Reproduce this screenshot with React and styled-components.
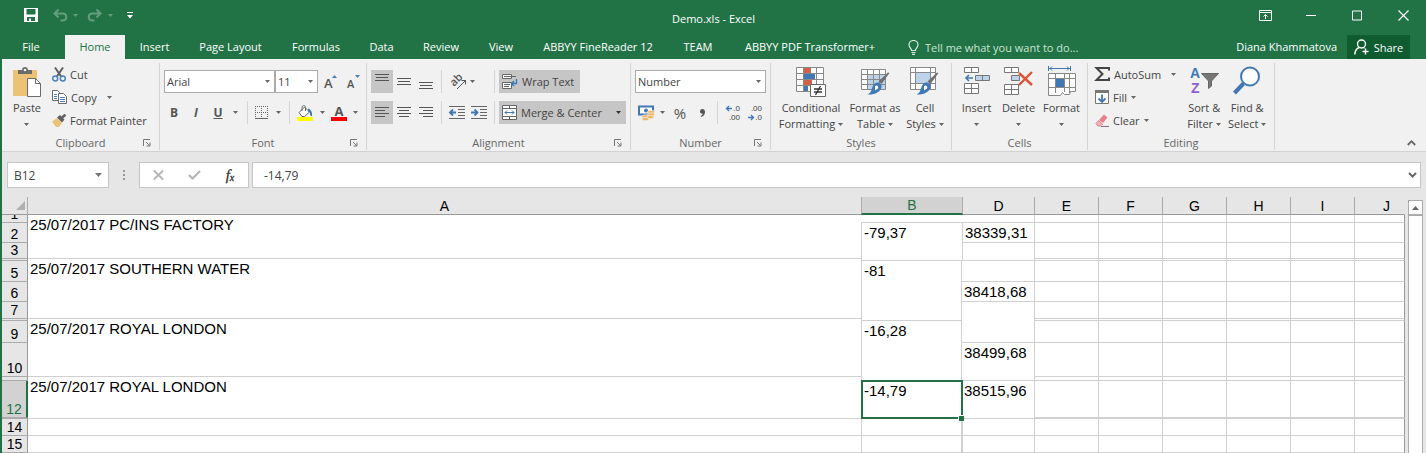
import React from 'react';
import styled, { createGlobalStyle, css } from 'styled-components';

const ui = '"Open Sans", "Noto Sans", sans-serif';
const sheetFont = '"Liberation Sans", Arial, sans-serif';

const Global = createGlobalStyle`
  *, *::before, *::after { box-sizing: border-box; }
  body { margin: 0; background: #e6e6e6; font-family: ${ui}; font-size: 12px; color: #444; }
  button, input, select { font: inherit; color: inherit; margin: 0; }
  svg { display: block; flex: none; overflow: visible; }
`;

const Window = styled.div`
  border-left: 1px solid #217346;
  box-shadow: inset 1px 0 #217346;
  padding-left: 1px;
  background: #e6e6e6;
`;

/* ---------- title bar and tabs ---------- */
const TitleBar = styled.header`
  display: grid;
  grid-template-columns: 1fr auto 1fr;
  align-items: center;
  height: 35px;
  margin-left: -1px;
  background: #217346;
  color: #fff;
`;
const Title = styled.h1`
  margin: 0;
  padding-top: 3px;
  font-size: 11px;
  font-weight: 400;
  line-height: 16px;
`;
const QuickAccess = styled.div`
  display: flex;
  align-items: center;
  padding: 0 0 5px 23px;
`;
const QuickButton = styled.button`
  display: flex;
  align-items: center;
  justify-content: center;
  width: ${p => p.$w}px;
  height: 20px;
  margin-right: ${p => p.$gap || 0}px;
  padding: 0;
  border: 0;
  background: none;
  color: #fff;
  opacity: ${p => (p.$dim ? 0.3 : 1)};
`;
const WindowButtons = styled.div`
  display: flex;
  justify-content: flex-end;
  padding: 0 0 5px;
`;
const WindowButton = styled.button`
  display: flex;
  align-items: center;
  justify-content: center;
  width: 46px;
  height: 30px;
  padding: 0;
  border: 0;
  background: none;
  color: #fff;
`;
const TabBar = styled.nav`
  display: flex;
  height: 24px;
  margin-left: -1px;
  padding-left: 1px;
  padding-right: 16px;
  background: #217346;
  color: #fff;
`;
const Tab = styled.button`
  width: ${p => p.$w}px;
  padding: 0;
  border: 0;
  line-height: 24px;
  font-size: 11px;
  white-space: nowrap;
  background: ${p => (p.$active ? '#f1f1f1' : 'none')};
  color: ${p => (p.$active ? '#217346' : '#fff')};
  ${p => p.$file && css`margin-right: 5px;`}
`;
const TellMe = styled.label`
  display: flex;
  align-items: center;
  gap: 6px;
  flex: 1;
  padding-left: 16px;
`;
const TellInput = styled.input`
  width: 200px;
  padding: 0;
  border: 0;
  outline: 0;
  background: none;
  font-size: 11px;
  &::placeholder { color: #c9e3d3; opacity: 1; }
`;
const User = styled.span`
  padding-right: 10px;
  font-size: 11px;
  line-height: 24px;
`;
const Share = styled.button`
  display: flex;
  align-items: center;
  justify-content: center;
  gap: 5px;
  width: 63px;
  padding: 0;
  border: 0;
  background: #0e5c2f;
  color: #fff;
  font-size: 11px;
`;

/* ---------- ribbon ---------- */
const Ribbon = styled.section`
  display: flex;
  height: 93px;
  padding: 4px 0 1px;
  border-bottom: 1px solid #d2d2d2;
  background: #f1f1f1;
`;
const GroupBox = styled.section`
  display: flex;
  flex-direction: column;
  flex: none;
  width: ${p => p.$w}px;
  border-right: 1px solid #d5d5d5;
`;
const GroupBody = styled.div`
  display: flex;
  flex: 1;
  padding: 0 ${p => p.$padRight || 0}px 0 ${p => p.$pad || 0}px;
`;
const Caption = styled.footer`
  display: grid;
  grid-template-columns: 16px 1fr 16px;
  height: 14px;
  align-items: center;
  text-align: center;
  font-size: 11px;
  line-height: 14px;
  color: #666;
`;
const Launcher = styled.button`
  padding: 0;
  border: 0;
  background: none;
  color: #777;
`;
const BigButton = styled.button`
  display: flex;
  flex-direction: column;
  align-items: center;
  flex: none;
  width: ${p => p.$w}px;
  padding: 4px 0 0;
  border: 0;
  background: none;
`;
const BigLabel = styled.span`
  display: flex;
  flex-direction: column;
  align-items: center;
  margin-top: 3px;
  font-size: 11px;
  line-height: 16px;
  white-space: nowrap;
`;
const BigLine = styled.span`
  display: flex;
  align-items: center;
  justify-content: center;
  gap: 3px;
  height: 16px;
`;
const Column = styled.div`
  display: flex;
  flex-direction: column;
  flex: none;
  padding-top: ${p => p.$top || 0}px;
  gap: ${p => p.$gap || 0}px;
  padding-right: ${p => p.$right || 0}px;
`;
const Row = styled.div`
  display: flex;
  align-items: center;
  height: 23px;
`;
const SmallButton = styled.button`
  display: flex;
  align-items: center;
  gap: ${p => p.$gap || 4}px;
  height: 22px;
  padding: 0;
  border: 0;
  background: none;
  font-size: 11px;
  white-space: nowrap;
`;
const SmallCaret = styled.span`
  padding-left: ${p => p.$left || 0}px;
`;
const Tool = styled.button`
  display: flex;
  align-items: center;
  justify-content: center;
  flex: none;
  width: ${p => p.$w || 22}px;
  height: 23px;
  padding: 0;
  border: 0;
  background: ${p => (p.$on ? '#c6c6c6' : 'none')};
  font-size: ${p => p.$size || 12}px;
  font-weight: ${p => (p.$bold ? 700 : 400)};
  font-style: ${p => (p.$italic ? 'italic' : 'normal')};
  text-decoration: ${p => (p.$under ? 'underline' : 'none')};
  color: #555;
`;
const WideTool = styled.button`
  display: flex;
  align-items: center;
  gap: 4px;
  width: ${p => p.$w}px;
  height: 23px;
  padding: 0 5px 0 3px;
  border: 0;
  background: #c6c6c6;
  font-size: 11px;
  white-space: nowrap;
  & > :last-child { margin-left: ${p => (p.$drop ? 'auto' : 0)}; }
`;
const Divider = styled.span`
  flex: none;
  width: 1px;
  height: 23px;
  margin: 0 ${p => p.$r}px 0 ${p => p.$l}px;
  background: #d5d5d5;
`;
const SelectWrap = styled.label`
  display: grid;
  align-items: center;
  flex: none;
  width: ${p => p.$w}px;
  & > * { grid-area: 1 / 1; }
  & > svg { justify-self: end; margin-right: 5px; pointer-events: none; }
`;
const Select = styled.select`
  appearance: none;
  width: 100%;
  height: 23px;
  padding: 0 2px;
  border: 1px solid #ababab;
  border-radius: 0;
  background: #fff;
  font-size: 11px;
`;
const CollapseButton = styled.button`
  margin: auto 10px 4px auto;
  padding: 0;
  border: 0;
  background: none;
`;

/* ---------- formula bar ---------- */
const FormulaBar = styled.div`
  display: flex;
  height: 45px;
  padding: 10px 5px 9px;
`;
const Box = styled.div`
  display: flex;
  align-items: center;
  width: ${p => (p.$w ? p.$w + 'px' : 'auto')};
  flex: ${p => (p.$w ? 'none' : 1)};
  height: 26px;
  padding-right: ${p => p.$right || 0}px;
  border: 1px solid #c6c6c6;
  background: #fff;
`;
const BarInput = styled.input`
  flex: 1;
  min-width: 0;
  height: 22px;
  padding: 0 0 0 ${p => p.$pad}px;
  border: 0;
  outline: 0;
  background: none;
`;
const Grip = styled.span`
  display: flex;
  align-items: center;
  justify-content: center;
  width: 30px;
`;
const BarButton = styled.button`
  display: flex;
  align-items: center;
  justify-content: center;
  flex: 1;
  padding: 0;
  border: 0;
  background: none;
`;
const Spacer = styled.span`
  width: 3px;
`;
const Fx = styled.span`
  font-family: "Liberation Serif", serif;
  font-style: italic;
  font-size: 15px;
  line-height: 16px;
  color: #333;
  -webkit-text-stroke: 0.3px #333;
  sub { font-size: 10px; line-height: 0; vertical-align: -1px; }
`;

/* ---------- sheet ---------- */
const SheetArea = styled.main`
  display: flex;
  padding-right: 3px;
`;
const Sheet = styled.table`
  flex: 1;
  width: 100%;
  table-layout: fixed;
  border-collapse: separate;
  border-spacing: 0;
  font-family: ${sheetFont};
  font-size: 15px;
  line-height: 17px;
  color: #000;
`;
const Col = styled.col`
  width: ${p => (p.$w ? p.$w + 'px' : 'auto')};
`;
const ColHead = styled.th`
  height: 18px;
  padding: ${p => (p.$last ? '0 0 0 14px' : 0)};
  border-right: ${p => (p.$open ? 0 : 1)}px solid ${p => (p.$last ? '#e6e6e6' : '#ababab')};
  border-bottom: 1px solid #999;
  background: #e6e6e6;
  font-size: 14px;
  font-weight: 400;
  line-height: 16px;
  ${p => p.$active && css`
    border-left: 1px solid #ababab;
    border-bottom: 2px solid #217346;
    background: #d2d2d2;
    color: #217346;
  `}
`;
const Corner = styled(ColHead)`
  vertical-align: middle;
  svg { margin: 0 2px 0 auto; }
`;
const RowHead = styled.th`
  height: ${p => p.$h}px;
  padding: 0;
  border-right: ${p => (p.$active ? '2px solid #217346' : '1px solid #999')};
  border-bottom: 1px solid #ababab;
  background: ${p => (p.$active ? '#d2d2d2' : '#e6e6e6')};
  color: ${p => (p.$active ? '#217346' : '#000')};
  font-weight: 400;
  font-size: 14px;
  line-height: 15px;
`;
const RowLabel = styled.div`
  display: flex;
  align-items: flex-end;
  justify-content: center;
  height: ${p => p.$h - 1}px;
  overflow: hidden;
`;
const Cell = styled.td`
  position: relative;
  padding: 1px 0 0 2px;
  vertical-align: top;
  background: #fff;
  border: 0 solid #d0d0d0;
  border-bottom-width: 1px;
  border-right-width: ${p => (p.$noRight ? 0 : 1)}px;
  border-left-width: ${p => (p.$left ? 1 : 0)}px;
  white-space: nowrap;
  ${p => p.$flat && css`padding: 0;`}
  ${p => p.$edge && css`border-right-color: #999;`}
`;
const Selection = styled.span`
  position: absolute;
  inset: -1px -2px -1px -1px;
  border: 2px solid #217346;
  z-index: 1;
  &::after {
    content: '';
    position: absolute;
    right: -3px;
    bottom: -4px;
    width: 6px;
    height: 6px;
    border: solid #fff;
    border-width: 1px 0 0 1px;
    background: #217346;
  }
`;
const Scrollbar = styled.div`
  display: flex;
  flex-direction: column;
  flex: none;
  width: 15px;
  margin: 3px 0 0 3px;
`;
const ScrollButton = styled.button`
  display: flex;
  align-items: center;
  justify-content: center;
  height: 15px;
  padding: 0;
  border: 1px solid #ababab;
  background: #fff;
`;
const Thumb = styled.div`
  flex: 1;
  border: 1px solid #ababab;
  border-bottom: 0;
  background: #fff;
`;

/* ---------- icons ---------- */
const Caret = ({ c = '#666' }) => (
  <svg width="5" height="3" viewBox="0 0 5 3"><path d="M0 0h5L2.5 3z" fill={c} /></svg>
);
const SaveIcon = () => (
  <svg width="14" height="14" viewBox="0 0 14 14"><path fillRule="evenodd" fill="#fff" d="M0 0h14v14H0zM2.500 1v5.500h9V1zM3 9v4h2v-2.500h2V13h4V9z" /></svg>
);
const UndoIcon = ({ flip }) => (
  <svg width="15" height="13" viewBox="0 0 15 13" fill="none" stroke="#fff" strokeWidth="2">
    <g transform={flip ? 'matrix(-1 0 0 1 15 0)' : undefined}><path d="M5.500 .5 1.500 4.500l4 4M2 4.500h7.500c5 0 5 7 0 7H7.500" /></g>
  </svg>
);
const MoreIcon = () => (
  <svg width="6" height="7" viewBox="0 0 6 7" fill="#fff"><path d="M0 0h6v1H0zM0 3h6L3 6.500z" /></svg>
);
const RibbonOptIcon = () => (
  <svg width="13" height="11" viewBox="0 0 13 11" fill="none" stroke="#fff"><path d="M.5.500h12v10H.500zM.500 2.500h12M6.500 9V4.500M4.500 6.500l2-2 2 2" /></svg>
);
const MinIcon = () => <svg width="10" height="11" viewBox="0 0 10 11" stroke="#fff"><path d="M0 5.500h10" /></svg>;
const MaxIcon = () => <svg width="10" height="11" viewBox="0 0 10 11" stroke="#fff" fill="none"><path d="M.5 1h9v9h-9z" /></svg>;
const CloseIcon = () => <svg width="11" height="11" viewBox="0 0 11 11" stroke="#fff" strokeWidth="1.200"><path d="m.5.500 10 10M10.500.500l-10 10" /></svg>;
const BulbIcon = () => (
  <svg width="11" height="15" viewBox="0 0 11 15" fill="none" stroke="#d8ecdf" strokeWidth="1.200"><path d="M3.500 10.500C3.500 8 1 7.500 1 4.800a4.500 4.300 0 0 1 9 0c0 2.700-2.500 3.200-2.500 5.700zM3.500 12.500h4M4 14.300h3" /></svg>
);
const PersonIcon = () => (
  <svg width="15" height="16" viewBox="0 0 15 16" fill="none" stroke="#fff" strokeWidth="1.400"><circle cx="7.500" cy="5" r="4" /><path d="M.8 15.500c.2-4 2-6.200 4.500-7M9.500 8.500l1 .8M11.500 9.500v6M8.500 12.500h6" /></svg>
);
const LaunchIcon = () => (
  <svg width="8" height="8" viewBox="0 0 8 8" fill="none" stroke="#777"><path d="M.5 7V.500H7M3 3l3.500 3.500M7 3.500V7H3.500" /></svg>
);
const PasteIcon = () => (
  <svg width="30" height="30" viewBox="0 0 30 30">
    <path d="M1 3h24v26H1z" fill="#ecc277" />
    <path d="M6 3h4c0-4 6-4 6 0h4v4H6z" fill="#6a6a6a" />
    <circle cx="13" cy="3" r="1.300" fill="#f1f1f1" />
    <path d="M15.500 11.500h8l5 5v13h-13z" fill="#fff" stroke="#6a6a6a" />
    <path d="M23.500 11.500v5h5" fill="none" stroke="#6a6a6a" />
  </svg>
);
const CutIcon = () => (
  <svg width="14" height="15" viewBox="0 0 14 15" fill="none">
    <path d="M3 .5 9.500 10M11 .5 4.500 10" stroke="#5f5f5f" strokeWidth="2" />
    <circle cx="3.200" cy="11.500" r="2.500" stroke="#4a7ebb" strokeWidth="1.400" /><circle cx="10.800" cy="11.500" r="2.500" stroke="#4a7ebb" strokeWidth="1.400" />
  </svg>
);
const CopyIcon = () => (
  <svg width="15" height="14" viewBox="0 0 15 14" fill="#fff" stroke="#6a6a6a">
    <path d="M.5.500h5l2 2v8h-7z" /><path d="M6.500 3.500h5l3 3v7h-8z" />
    <path d="M2 4.500h3M2 6.500h3M2 8.500h3M8 7.500h5M8 9.500h5M8 11.500h5" stroke="#4a7ebb" />
  </svg>
);
const PainterIcon = () => (
  <svg width="15" height="13" viewBox="0 0 15 13">
    <path d="M0 7.500 5 4l5 5-3 4H4z" fill="#ecc277" /><path d="m5 3.500 3-2.500 4.500 4.500-2.500 3z" fill="#5f5f5f" /><path d="M10 3.500 13.500.800" stroke="#5f5f5f" strokeWidth="2.500" />
  </svg>
);
const GrowIcon = ({ down }) => (
  <svg width="14" height="15" viewBox="0 0 14 15">
    <text x="0" y="14" fontFamily="Open Sans" fontSize={down ? 11 : 13} fontWeight="600" fill="#555">A</text>
    <path d={down ? 'M8 1h5l-2.500 3z' : 'M8 4h5l-2.500-3z'} fill="#4a7ebb" />
  </svg>
);
const BorderIcon = () => (
  <svg width="13" height="13" viewBox="0 0 13 13" fill="none" stroke="#666"><path d="M.5 0v12M6.500 0v12M12.500 0v12M0 .5h13M0 6.500h13" strokeDasharray="1 1" /><path d="M0 12.500h13" /></svg>
);
const FillColorIcon = () => (
  <svg width="16" height="16" viewBox="0 0 16 16">
    <path d="M2 7.500 7.500 2l5 5-5 4.500H5z" fill="#fff" stroke="#666" /><path d="M5 6V2.500c0-2.500 3.500-2.500 3.500 0V6" fill="none" stroke="#666" />
    <path d="M11 3.500c3 1 4.500 3.500 4 8l-2-1.500c.5-2-.500-3-2-3.500z" fill="#3f78b5" /><path d="M0 12h16v4H0z" fill="#ff0" />
  </svg>
);
const FontColorIcon = () => (
  <svg width="16" height="16" viewBox="0 0 16 16"><text x="8" y="11" textAnchor="middle" fontFamily="Open Sans" fontSize="13" fontWeight="700" fill="#555">A</text><path d="M0 12h16v4H0z" fill="#f00" /></svg>
);
const LinesIcon = ({ rows, h = 13 }) => (
  <svg width="14" height={h} viewBox={`0 0 14 ${h}`} stroke="#555">{rows.map(([y, x1, x2]) => <path key={y} d={`M${x1} ${y}.500H${x2}`} />)}</svg>
);
const AngleIcon = () => (
  <svg width="17" height="16" viewBox="0 0 17 16">
    <text transform="translate(4 13) rotate(-45)" fontFamily="Open Sans" fontSize="11" fontWeight="600" fill="#555">ab</text>
    <path d="M7 15 15.500 6.500M11.500 6.500h4v4" fill="none" stroke="#555" />
  </svg>
);
const IndentIcon = ({ right }) => (
  <svg width="16" height="13" viewBox="0 0 16 13" fill="none" stroke="#666">
    <path d="M0 .5h16M9 3.500h7M9 6.500h7M9 9.500h7M0 12.500h16" />
    <path d={right ? 'M0 6.500h6M3.500 3.500l3 3-3 3' : 'M7 6.500H1M4 3.500l-3 3 3 3'} stroke="#3f78b5" strokeWidth="1.800" />
  </svg>
);
const WrapIcon = () => (
  <svg width="16" height="15" viewBox="0 0 16 15" fill="#fff" stroke="#666">
    <path d="M.5.500h9v4h-9zM.500 8.500h9v6h-9z" /><path d="M2 2.500h12M2 10.500h6M2 12.500h5" />
    <path d="M14.500 5v4.500H10M12 7l-2.500 2.500L12 12" fill="none" stroke="#3f78b5" strokeWidth="1.400" />
  </svg>
);
const MergeIcon = () => (
  <svg width="15" height="15" viewBox="0 0 15 15" fill="#fff" stroke="#666">
    <path d="M.5.500h14v14H.500zM.500 3.500h14M.500 11.500h14M7.500 0v3.500M7.500 11.500v3.500" /><path d="M3 7.500h9M5 5.500l-2 2 2 2M10 5.500l2 2-2 2" fill="none" stroke="#3f78b5" />
  </svg>
);
const MoneyIcon = () => (
  <svg width="17" height="16" viewBox="0 0 17 16">
    <path d="M1 1.500h14v8H1z" fill="#fff" stroke="#3f78b5" strokeWidth="2" /><circle cx="8" cy="5.500" r="2" fill="#3f78b5" />
    <g fill="#ecb96a" stroke="#f1f1f1" strokeWidth=".6"><ellipse cx="13" cy="7" rx="3.500" ry="1.700" /><ellipse cx="13" cy="9.500" rx="3.500" ry="1.700" /><ellipse cx="7.500" cy="11.500" rx="3.500" ry="1.700" /><ellipse cx="12.500" cy="12" rx="3.500" ry="1.700" /><ellipse cx="7.500" cy="14" rx="3.500" ry="1.700" /></g>
  </svg>
);
const CommaIcon = () => (
  <svg width="5" height="8" viewBox="0 0 5 8"><path d="M2.300 0C4 0 5 1.200 5 3c0 2.500-1.500 4.300-4 5l-.3-1C2 6.500 2.700 5.700 2.700 4.600 1 4.800 0 3.800 0 2.400 0 1 1 0 2.300 0z" fill="#555" /></svg>
);
const DecimalIcon = ({ less }) => (
  <svg width="16" height="16" viewBox="0 0 16 16">
    <g fontFamily="Liberation Sans" fontSize="8" fill="#444" textAnchor="end"><text x="15" y="6">{less ? '.00' : '.0'}</text><text x="15" y="15">{less ? '.0' : '.00'}</text></g>
    <path d={less ? 'M1 12.500h5.500M4 10l2.500 2.500L4 15' : 'M7 3.500H1.500M4 1 1.500 3.500 4 6'} fill="none" stroke="#3f78b5" strokeWidth="1.300" />
  </svg>
);
const CondIcon = () => (
  <svg width="30" height="30" viewBox="0 0 30 30">
    <path d="M.5.500h27v24H.500z" fill="#fff" stroke="#888" />
    <path d="M8 1h6v5H8zM8 13h8v5H8z" fill="#d35f45" /><path d="M8 7h11v5H8zM8 19h4v5H8z" fill="#3f78b5" />
    <path d="M7.500 0v24M14.500 0v6M20.500 0v24M0 6.500h28M0 12.500h28M0 18.500h28" stroke="#888" fill="none" />
    <path d="M14.500 17.500h15v12h-15z" fill="#fff" stroke="#666" /><path d="M18 22h8M18 25h8M24.500 19l-5 9" stroke="#333" strokeWidth="1.300" />
  </svg>
);
const Brush = () => (
  <g><path d="m28.500 6-8 11-3-2.500L27 5.500z" fill="#6f6f6f" /><path d="M17 15.500c2 .3 4 2 3.500 4.500-1 5-7 8-14 7.500 4-2 3.500-4 5-7.500 1-3 3-4.700 5.500-4.500z" fill="#3f78b5" /><path d="M14 19c2-1.500 4 .5 3 2.500l-3 2z" fill="#fff" /></g>
);
const TableIcon = () => (
  <svg width="29" height="30" viewBox="0 0 29 30">
    <path d="M.5 2.500h24v20H.500z" fill="#fff" /><path d="M6.500 7.500h18v15h-18z" fill="#bdd3ea" />
    <path d="M.5 2.500h24v20H.500zM6.500 2v20M12.500 2v20M18.500 2v20M0 7.500h24M0 12.500h24M0 17.500h24" stroke="#888" fill="none" /><Brush />
  </svg>
);
const CellStyleIcon = () => (
  <svg width="30" height="30" viewBox="0 0 30 30">
    <path d="M.5.500h25v22H.500z" fill="#fff" stroke="#888" /><path d="M5.500 0v22M20.500 0v22M0 5.500h25M0 16.500h25" stroke="#888" /><path d="M6 6h14v10H6z" fill="#bdd3ea" /><Brush />
  </svg>
);
const InsertIcon = () => (
  <svg width="26" height="30" viewBox="0 0 26 30" fill="#fff" stroke="#777">
    <path d="M.5.500h14v5H.500zM7.500 0v5M.500 16.500h14v10H.500zM7.500 16v10M.500 21.500h14" /><path d="M11.500 8.500h14v5h-14zM18.500 8v5" fill="#bdd3ea" /><path d="M9 11H2M5 8l-3 3 3 3" fill="none" stroke="#3f78b5" strokeWidth="1.600" />
  </svg>
);
const DeleteIcon = () => (
  <svg width="30" height="30" viewBox="0 0 30 30" fill="#fff" stroke="#777">
    <path d="M.5.500h14v5H.500zM7.500 0v5M.500 17.500h14v10H.500zM7.500 17v10M.500 22.500h14" /><path d="M7.500 8.500h8v5h-8z" fill="#bdd3ea" /><path d="m15 6 13 12M28 5 15 18" stroke="#dd5536" strokeWidth="2.400" fill="none" />
  </svg>
);
const FormatIcon = () => (
  <svg width="28" height="30" viewBox="0 0 28 30" fill="none" stroke="#888">
    <path d="M.5 6.500h27v18h-5l-1 3h-5l-2-2-2 3H.500z" fill="#fff" /><path d="M7.500 6v20M16.500 6v19M21.500 6v20M0 11.500h28M0 20.500h28" /><path d="M8 12h8v8H8z" fill="#3f78b5" stroke="none" />
    <path d="M.5-1v5M22.500-1v5M1 1.500h21M4-.500l-2 2 2 2M19-.500l2 2-2 2" stroke="#3f78b5" />
  </svg>
);
const SumIcon = () => <svg width="15" height="14" viewBox="0 0 15 14" fill="none" stroke="#444" strokeWidth="2"><path d="M14 3.500V1H1.500L7.500 7l-6 6H14v-2.500" /></svg>;
const FillIcon = () => (
  <svg width="14" height="14" viewBox="0 0 14 14"><path d="M.5.500h13v13H.500z" fill="#fff" stroke="#777" /><path d="M0 0h14v3H0z" fill="#777" /><path d="M7 4.500v7M3.500 8.500 7 12l3.500-3.500" fill="none" stroke="#3f78b5" strokeWidth="1.800" /></svg>
);
const ClearIcon = () => (
  <svg width="14" height="13" viewBox="0 0 14 13"><path d="m4 6 5-5.500 3.500 3L8 9z" fill="#e8808c" /><path d="M3.500 6.500 7.500 10l-2 2H3L1 9.500z" fill="#f3b2ba" stroke="#e8808c" /><path d="M6 12.500h8" stroke="#777" /></svg>
);
const SortIcon = () => (
  <svg width="29" height="30" viewBox="0 0 29 30"><g fontFamily="Liberation Sans" fontSize="14" fontWeight="700"><text x="0" y="11" fill="#3f78b5">A</text><text x="1" y="26" fill="#8b5fcf">Z</text></g><path d="M11.500 6.500h17L21.500 14v5l-3 2.500V14z" fill="#777" stroke="#666" /></svg>
);
const FindIcon = () => (
  <svg width="28" height="30" viewBox="0 0 28 30"><path d="m1.500 26 9-9.500" stroke="#3f78b5" strokeWidth="4" /><circle cx="17" cy="9.500" r="9" fill="#fdfdfd" stroke="#3f78b5" strokeWidth="2" /></svg>
);

/* ---------- composed parts ---------- */
const Group = ({ name, w, pad, padRight, launch, children }) => (
  <GroupBox $w={w} aria-label={name}>
    <GroupBody $pad={pad} $padRight={padRight}>{children}</GroupBody>
    <Caption><span /><span>{name}</span>{launch && <Launcher aria-label={`${name} settings`}><LaunchIcon /></Launcher>}</Caption>
  </GroupBox>
);
const Big = ({ w, icon, top, bottom }) => (
  <BigButton $w={w}>{icon}<BigLabel><BigLine>{top}</BigLine><BigLine>{bottom}<Caret /></BigLine></BigLabel></BigButton>
);
const Picker = ({ w, label, value }) => (
  <SelectWrap $w={w}><Select aria-label={label} defaultValue={value}><option>{value}</option></Select><Caret /></SelectWrap>
);

const tabs = [['Home', 60], ['Insert', 59], ['Page Layout', 93], ['Formulas', 78], ['Data', 53], ['Review', 66], ['View', 54], ['ABBYY FineReader 12', 140], ['TEAM', 60], ['ABBYY PDF Transformer+', 164]];

/* Each row lists the cells of columns A to D that start in it; columns E to J are plain. */
const rows = [
  { n: 1, h: 8, cells: [{ t: '25/07/2017 PC/INS FACTORY', rs: 3, noRight: true }, { cs: 3, flat: true }] },
  { n: 2, h: 20, cells: [{ t: '-79,37', rs: 3, cs: 2, left: true }, { t: '38339,31' }] },
  { n: 3, h: 16, cells: [{ rs: 2 }] },
  { h: 2, cells: [{ t: '25/07/2017 SOUTHERN WATER', rs: 4, noRight: true }] },
  { n: 5, h: 21, cells: [{ t: '-81', rs: 4, left: true }, { cs: 2 }] },
  { n: 6, h: 20, cells: [{ t: '38418,68', cs: 2 }] },
  { n: 7, h: 17, cells: [{ rs: 3, cs: 2 }] },
  { h: 2, cells: [{ t: '25/07/2017 ROYAL LONDON', rs: 3, noRight: true }] },
  { n: 9, h: 22, cells: [{ t: '-16,28', rs: 3, left: true }] },
  { n: 10, h: 34, cells: [{ t: '38499,68', rs: 2, cs: 2 }] },
  { h: 4, cells: [{ t: '25/07/2017 ROYAL LONDON', rs: 3, noRight: true }] },
  { n: 12, h: 37, active: true, cells: [{ t: '-14,79', rs: 2, left: true, selected: true }, { t: '38515,96', rs: 2, cs: 2 }] },
  { h: 1, cells: [] },
  { n: 14, h: 17, cells: [{ noRight: true }, { left: true }, { flat: true }, {}] },
  { n: 15, h: 17, cells: [{ noRight: true }, { left: true }, { flat: true }, {}] },
];
const plain = ['E', 'F', 'G', 'H', 'I', 'J'];

export default function App() {
  return (
    <Window>
      <Global />
      <TitleBar>
        <QuickAccess>
          <QuickButton $w={14} $gap={15} aria-label="Save"><SaveIcon /></QuickButton>
          <QuickButton $w={15} $gap={5} $dim aria-label="Undo"><UndoIcon /></QuickButton>
          <QuickButton $w={5} $gap={9} $dim aria-label="Undo list"><Caret c="#fff" /></QuickButton>
          <QuickButton $w={15} $gap={6} $dim aria-label="Redo"><UndoIcon flip /></QuickButton>
          <QuickButton $w={5} $gap={14} $dim aria-label="Redo list"><Caret c="#fff" /></QuickButton>
          <QuickButton $w={6} aria-label="Customize"><MoreIcon /></QuickButton>
        </QuickAccess>
        <Title>Demo.xls - Excel</Title>
        <WindowButtons>
          <WindowButton aria-label="Ribbon options"><RibbonOptIcon /></WindowButton>
          <WindowButton aria-label="Minimize"><MinIcon /></WindowButton>
          <WindowButton aria-label="Maximize"><MaxIcon /></WindowButton>
          <WindowButton aria-label="Close"><CloseIcon /></WindowButton>
        </WindowButtons>
      </TitleBar>
      <TabBar>
        <Tab $w={58} $file>File</Tab>
        {tabs.map(([t, w], i) => <Tab key={t} $w={w} $active={i === 0}>{t}</Tab>)}
        <TellMe><BulbIcon /><TellInput aria-label="Tell me" placeholder="Tell me what you want to do..." /></TellMe>
        <User>Diana Khammatova</User>
        <Share><PersonIcon />Share</Share>
      </TabBar>

      <Ribbon>
        <Group name="Clipboard" w={158} launch>
          <Big w={50} icon={<PasteIcon />} top="Paste" />
          <Column $gap={1}>
            <SmallButton><CutIcon />Cut</SmallButton>
            <SmallButton><CopyIcon />Copy<SmallCaret $left={6}><Caret /></SmallCaret></SmallButton>
            <SmallButton $gap={3}><PainterIcon />Format Painter</SmallButton>
          </Column>
        </Group>
        <Group name="Font" w={207} pad={4} launch>
          <Column $top={7} $gap={8}>
            <Row>
              <Picker w={111} label="Font" value="Arial" />
              <Picker w={43} label="Font size" value="11" />
              <Tool $w={26} aria-label="Increase font size"><GrowIcon /></Tool>
              <Tool $w={20} aria-label="Decrease font size"><GrowIcon down /></Tool>
            </Row>
            <Row>
              <Tool $w={20} $bold>B</Tool><Tool $w={24} $bold $italic>I</Tool><Tool $w={20} $bold $under>U</Tool>
              <Tool $w={14} aria-label="Underline style"><Caret /></Tool>
              <Divider $l={5} $r={7} />
              <Tool $w={13} aria-label="Borders"><BorderIcon /></Tool><Tool $w={20} aria-label="Border style"><Caret /></Tool>
              <Divider $l={1} $r={7} />
              <Tool $w={16} aria-label="Fill color"><FillColorIcon /></Tool><Tool $w={18} aria-label="Fill colors"><Caret /></Tool>
              <Tool $w={16} aria-label="Font color"><FontColorIcon /></Tool><Tool $w={16} aria-label="Font colors"><Caret /></Tool>
            </Row>
          </Column>
        </Group>
        <Group name="Alignment" w={264} pad={4} launch>
          <Column $top={7} $gap={8}>
            <Row>
              <Tool $on aria-label="Top align"><LinesIcon rows={[[0, 0, 14], [3, 1, 13], [6, 0, 14]]} h={15} /></Tool>
              <Tool aria-label="Middle align"><LinesIcon rows={[[3, 0, 14], [6, 1, 13], [9, 0, 14]]} /></Tool>
              <Tool aria-label="Bottom align"><LinesIcon rows={[[6, 0, 14], [9, 1, 13], [12, 0, 14]]} h={11} /></Tool>
              <Divider $l={4} $r={7} />
              <Tool $w={18} aria-label="Orientation"><AngleIcon /></Tool><Tool $w={10} aria-label="Orientation list"><Caret /></Tool>
            </Row>
            <Row>
              <Tool $on aria-label="Align left"><LinesIcon rows={[[1, 0, 14], [4, 0, 10], [7, 0, 14], [10, 0, 10]]} /></Tool>
              <Tool aria-label="Center"><LinesIcon rows={[[1, 0, 14], [4, 2, 12], [7, 0, 14], [10, 2, 12]]} /></Tool>
              <Tool aria-label="Align right"><LinesIcon rows={[[1, 0, 14], [4, 4, 14], [7, 0, 14], [10, 4, 14]]} /></Tool>
              <Divider $l={4} $r={4} />
              <Tool aria-label="Decrease indent"><IndentIcon /></Tool><Tool aria-label="Increase indent"><IndentIcon right /></Tool>
            </Row>
          </Column>
          <Column $top={7} $gap={8}>
            <Row><Divider $l={4} $r={4} /><WideTool $w={81}><WrapIcon />Wrap Text</WideTool></Row>
            <Row><Divider $l={4} $r={4} /><WideTool $w={127} $drop><MergeIcon />Merge &amp; Center<Caret c="#333" /></WideTool></Row>
          </Column>
        </Group>
        <Group name="Number" w={140} pad={4} launch>
          <Column $top={7} $gap={8}>
            <Row><Picker w={131} label="Number format" value="Number" /></Row>
            <Row>
              <Tool aria-label="Accounting format"><MoneyIcon /></Tool><Tool $w={10} aria-label="Currencies"><Caret /></Tool>
              <Tool $w={26} $size={15}>%</Tool><Tool $w={18} aria-label="Comma style"><CommaIcon /></Tool>
              <Divider $l={6} $r={4} />
              <Tool aria-label="Increase decimal"><DecimalIcon /></Tool><Tool aria-label="Decrease decimal"><DecimalIcon less /></Tool>
            </Row>
          </Column>
        </Group>
        <Group name="Styles" w={181} pad={4}>
          <Big w={72} icon={<CondIcon />} top="Conditional" bottom="Formatting" />
          <Big w={56} icon={<TableIcon />} top="Format as" bottom="Table" />
          <Big w={44} icon={<CellStyleIcon />} top="Cell" bottom="Styles" />
        </Group>
        <Group name="Cells" w={136} pad={4}>
          <Big w={41} icon={<InsertIcon />} top="Insert" />
          <Big w={43} icon={<DeleteIcon />} top="Delete" />
          <Big w={43} icon={<FormatIcon />} top="Format" />
        </Group>
        <Group name="Editing" w={187} pad={7}>
          <Column $right={7} $gap={1}>
            <SmallButton><SumIcon />AutoSum<SmallCaret $left={6}><Caret /></SmallCaret></SmallButton>
            <SmallButton><FillIcon />Fill<Caret /></SmallButton>
            <SmallButton><ClearIcon />Clear<Caret /></SmallButton>
          </Column>
          <Big w={42} icon={<SortIcon />} top="Sort &amp;" bottom="Filter" />
          <Big w={44} icon={<FindIcon />} top="Find &amp;" bottom="Select" />
        </Group>
        <CollapseButton aria-label="Collapse ribbon"><svg width="9" height="6" viewBox="0 0 9 6" fill="none" stroke="#666" strokeWidth="1.800"><path d="m.8 5 3.700-3.800L8.200 5" /></svg></CollapseButton>
      </Ribbon>

      <FormulaBar>
        <Box $w={102} $right={6}><BarInput $pad={6} aria-label="Name box" defaultValue="B12" /><svg width="7" height="4" viewBox="0 0 7 4"><path d="M0 0h7L3.500 4z" fill="#777" /></svg></Box>
        <Grip><svg width="2" height="11" viewBox="0 0 2 11" fill="#999"><path d="M0 0h2v2H0zM0 4h2v2H0zM0 8h2v2H0z" /></svg></Grip>
        <Box $w={110}>
          <BarButton aria-label="Cancel"><svg width="11" height="10" viewBox="0 0 11 10" stroke="#b5b5b5" strokeWidth="1.800"><path d="m.8.500 9.400 9M10.200.500l-9.400 9" /></svg></BarButton>
          <BarButton aria-label="Enter"><svg width="13" height="10" viewBox="0 0 13 10" stroke="#b5b5b5" strokeWidth="2.200" fill="none"><path d="m1 5 3.500 3.500L12 1" /></svg></BarButton>
          <BarButton aria-label="Insert function"><Fx>f<sub>x</sub></Fx></BarButton>
        </Box>
        <Spacer />
        <Box $right={3}><BarInput $pad={11} aria-label="Formula" defaultValue="-14,79" /><svg width="9" height="6" viewBox="0 0 9 6" fill="none" stroke="#666" strokeWidth="2"><path d="M1 1l3.500 3.500L8 1" /></svg></Box>
      </FormulaBar>

      <SheetArea>
        <Sheet>
          <colgroup><Col $w={26} /><Col /><Col $w={101} /><Col $w={1} /><Col $w={72} />{plain.map(c => <Col key={c} $w={c === 'J' ? 50 : 64} />)}</colgroup>
          <thead>
            <tr>
              <Corner aria-label="Select all"><svg width="9" height="9" viewBox="0 0 9 9"><path d="M9 0v9H0z" fill="#b1b1b1" /></svg></Corner>
              <ColHead $open>A</ColHead><ColHead colSpan={2} $active>B</ColHead><ColHead>D</ColHead>
              {plain.map(c => <ColHead key={c} $last={c === 'J'}>{c}</ColHead>)}
            </tr>
          </thead>
          <tbody>
            {rows.map((r, i) => (
              <tr key={i}>
                <RowHead $h={r.h} $active={r.active}>{r.n && <RowLabel $h={r.h}>{r.n}</RowLabel>}</RowHead>
                {r.cells.map((c, j) => (
                  <Cell key={j} rowSpan={c.rs} colSpan={c.cs} $left={c.left} $noRight={c.noRight} $flat={c.flat || !c.t}>{c.t}{c.selected && <Selection />}</Cell>
                ))}
                {plain.map(c => <Cell key={c} $flat $edge={c === 'J'} />)}
              </tr>
            ))}
          </tbody>
        </Sheet>
        <Scrollbar>
          <ScrollButton aria-label="Scroll up"><svg width="7" height="4" viewBox="0 0 7 4"><path d="M0 4h7L3.500 0z" fill="#666" /></svg></ScrollButton>
          <Thumb />
        </Scrollbar>
      </SheetArea>
    </Window>
  );
}
